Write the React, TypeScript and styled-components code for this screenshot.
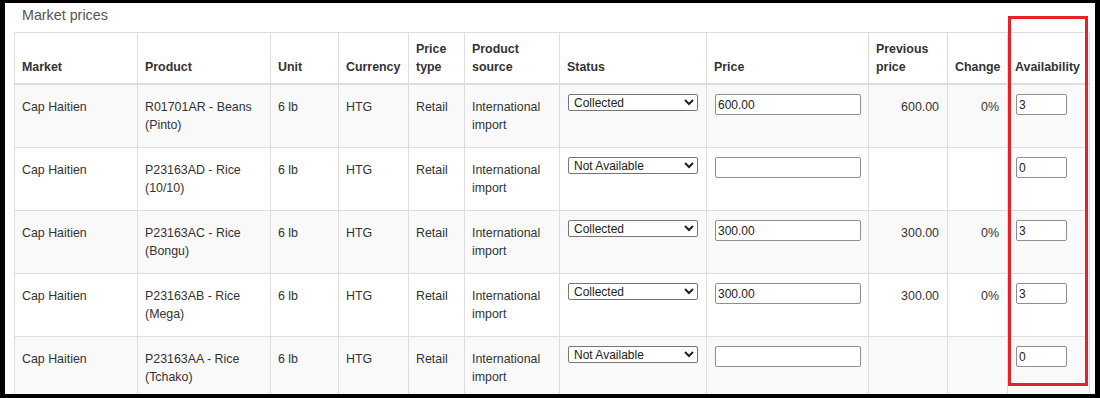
import React from "react";
import styled, { createGlobalStyle } from "styled-components";

const GlobalStyle = createGlobalStyle`
  html, body { margin: 0; padding: 0; background: #ffffff; }
  body { font-family: "Liberation Sans", Arial, sans-serif; }
`;

const Frame = styled.div`
  box-sizing: border-box;
  width: 1100px;
  height: 398px;
  border-style: solid;
  border-color: #000;
  border-width: 3px 5px 4px 5px;
  background: #fff;
  overflow: hidden;
  position: relative;
`;

const Panel = styled.div`
  padding: 0 6px 0 9px;
`;

const Title = styled.div`
  font-size: 14.3px;
  line-height: 20px;
  color: #555;
  padding: 2px 0 0 8px;
  height: 27px;
`;

const Table = styled.table`
  border-collapse: collapse;
  table-layout: fixed;
  width: 1075px;
  font-size: 12.4px;
  line-height: 18px;
  color: #333;
`;

const HeadCell = styled.th`
  border: 1px solid #ddd;
  border-bottom-width: 2px;
  padding: 7px 7px 7px 7px;
  text-align: left;
  vertical-align: bottom;
  font-weight: bold;
  color: #333;
`;

const Row = styled.tr<{ $striped: boolean }>`
  background: ${(p) => (p.$striped ? "#f9f9f9" : "#ffffff")};
`;

const Cell = styled.td<{ $align?: "left" | "right" }>`
  border: 1px solid #ddd;
  padding: 13px 8px 13px 7px;
  vertical-align: top;
  text-align: ${(p) => p.$align || "left"};
`;

const ControlCell = styled.td`
  border: 1px solid #ddd;
  padding: 9px 7px 0 8px;
  vertical-align: top;
`;

const StatusSelect = styled.select`
  box-sizing: border-box;
  width: 130px;
  height: 17px;
  font-family: "Liberation Sans", Arial, sans-serif;
  font-size: 12px;
  color: #222;
  border: 1px solid #767676;
  border-radius: 2px;
  background: #fff;
  padding: 0 0 0 1px;
  margin: 0;
  display: block;
`;

const TextInput = styled.input<{ $w: number }>`
  box-sizing: border-box;
  width: ${(p) => p.$w}px;
  height: 21px;
  font-family: "Liberation Sans", Arial, sans-serif;
  font-size: 12px;
  color: #222;
  border: 1px solid #8f8f8f;
  border-radius: 2px;
  background: #fff;
  padding: 0 2px;
  margin: 0;
  display: block;
`;

const Highlight = styled.div`
  position: absolute;
  box-sizing: border-box;
  left: 1003px;
  top: 13px;
  width: 80px;
  height: 370px;
  border: 3px solid #e8202a;
  pointer-events: none;
`;

const cols = [123, 133, 68, 70, 56, 95, 147, 162, 79, 60, 82];

type Item = {
  product: [string, string];
  status: string;
  price: string;
  prev: string;
  change: string;
  avail: string;
};

const items: Item[] = [
  { product: ["R01701AR - Beans", "(Pinto)"], status: "Collected", price: "600.00", prev: "600.00", change: "0%", avail: "3" },
  { product: ["P23163AD - Rice", "(10/10)"], status: "Not Available", price: "", prev: "", change: "", avail: "0" },
  { product: ["P23163AC - Rice", "(Bongu)"], status: "Collected", price: "300.00", prev: "300.00", change: "0%", avail: "3" },
  { product: ["P23163AB - Rice", "(Mega)"], status: "Collected", price: "300.00", prev: "300.00", change: "0%", avail: "3" },
  { product: ["P23163AA - Rice", "(Tchako)"], status: "Not Available", price: "", prev: "", change: "", avail: "0" },
];

export default function App() {
  return (
    <>
      <GlobalStyle />
      <Frame>
        <Panel>
          <Title>Market prices</Title>
          <Table>
            <colgroup>
              {cols.map((w, i) => (
                <col key={i} style={{ width: w }} />
              ))}
            </colgroup>
            <thead>
              <tr>
                <HeadCell>Market</HeadCell>
                <HeadCell>Product</HeadCell>
                <HeadCell>Unit</HeadCell>
                <HeadCell>Currency</HeadCell>
                <HeadCell>
                  Price
                  <br />
                  type
                </HeadCell>
                <HeadCell>
                  Product
                  <br />
                  source
                </HeadCell>
                <HeadCell>Status</HeadCell>
                <HeadCell>Price</HeadCell>
                <HeadCell>
                  Previous
                  <br />
                  price
                </HeadCell>
                <HeadCell>Change</HeadCell>
                <HeadCell>Availability</HeadCell>
              </tr>
            </thead>
            <tbody>
              {items.map((it, i) => (
                <Row key={i} $striped={i % 2 === 0}>
                  <Cell>Cap Haitien</Cell>
                  <Cell>
                    {it.product[0]}
                    <br />
                    {it.product[1]}
                  </Cell>
                  <Cell>6 lb</Cell>
                  <Cell>HTG</Cell>
                  <Cell>Retail</Cell>
                  <Cell>
                    International
                    <br />
                    import
                  </Cell>
                  <ControlCell>
                    <StatusSelect defaultValue={it.status}>
                      <option>Collected</option>
                      <option>Not Available</option>
                    </StatusSelect>
                  </ControlCell>
                  <ControlCell>
                    <TextInput $w={146} type="text" defaultValue={it.price} />
                  </ControlCell>
                  <Cell $align="right">{it.prev}</Cell>
                  <Cell $align="right">{it.change}</Cell>
                  <ControlCell>
                    <TextInput $w={51} type="text" defaultValue={it.avail} />
                  </ControlCell>
                </Row>
              ))}
            </tbody>
          </Table>
        </Panel>
        <Highlight />
      </Frame>
    </>
  );
}
